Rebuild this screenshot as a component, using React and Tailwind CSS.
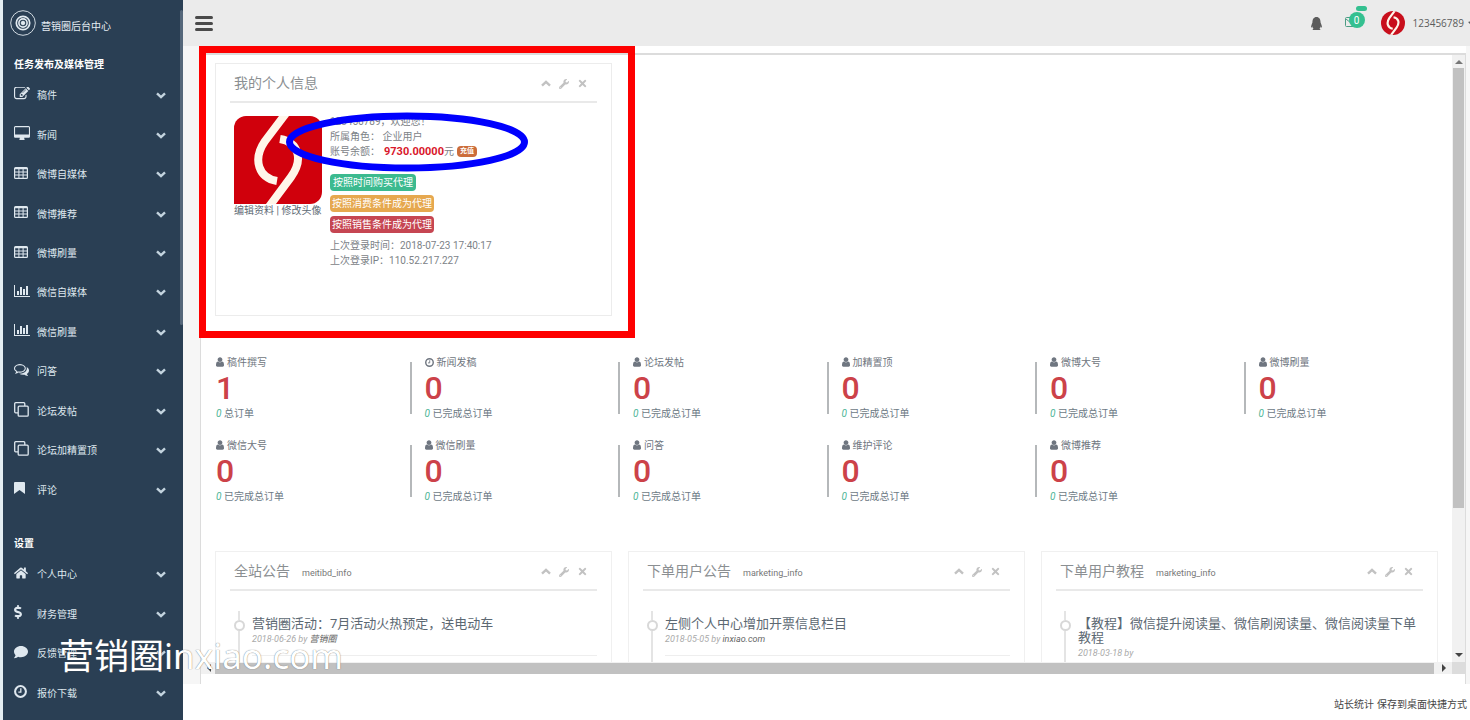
import React from "react";
import { FaQq, FaWrench, FaHome, FaDollarSign, FaComment, FaTimes } from "react-icons/fa";

const Svg = ({ box, d, className }) => (
  <svg viewBox={box} className={className} fill="currentColor" aria-hidden="true">
    <path fillRule="evenodd" d={d} />
  </svg>
);

const EDIT =
  "M888 1184l116-116-152-152-116 116v56h96v96h56zm440-720q-16-16-33 1l-350 350q-17 17-1 33t33-1l350-350q17-17 1-33zm80 594v190q0 119-84.5 203.5t-203.5 84.5h-832q-119 0-203.5-84.5t-84.5-203.5v-832q0-119 84.5-203.5t203.5-84.5h832q63 0 117 25 15 7 18 23 3 17-9 29l-49 49q-14 14-32 8-23-6-45-6h-832q-66 0-113 47t-47 113v832q0 66 47 113t113 47h832q66 0 113-47t47-113v-126q0-13 9-22l64-64q15-15 35-7t20 29zm-96-738l288 288-672 672h-288v-288zm444 132l-92 92-288-288 92-92q28-28 68-28t68 28l152 152q28 28 28 68t-28 68z";
const DESKTOP =
  "M1792 992v-832q0-13-9.5-22.5t-22.5-9.5h-1600q-13 0-22.5 9.5t-9.5 22.5v832q0 13 9.5 22.5t22.5 9.5h1600q13 0 22.5-9.5t9.5-22.5zM1920 160v1088q0 66-47 113t-113 47h-544q0 37 16 77.5t32 71 16 43.5q0 26-19 45t-45 19h-512q-26 0-45-19t-19-45q0-14 16-44t32-70 16-78h-544q-66 0-113-47t-47-113v-1088q0-66 47-113t113-47h1600q66 0 113 47t47 113z";
const BARS =
  "M640 896v512h-256v-512h256zm384-512v1024h-256v-1024h256zm1024 1152v128h-2048v-1536h128v1408h1920zm-640-896v768h-256v-768h256zm384-384v1152h-256v-1152h256z";
const COMMENTS =
  "M704 384q-153 0-286 52t-211.5 141-78.5 191q0 82 53 158t149 132l97 56-35 84q34-20 62-39l44-31 53 10q78 14 153 14 153 0 286-52t211.5-141 78.5-191-78.5-191-211.5-141-286-52zm0-128q191 0 353.5 68.5t256.500 186.500 94 257-94 257-256.500 186.500-353.500 68.500q-86 0-176-16-124 88-278 128-36 9-86 16h-3q-11 0-20.500-8t-11.500-21q-1-3-1-6.500t.5-6.500 2-6l2.500-5 3.500-5.500 4-5 4.500-5 4-4.500q5-6 23-25t26-29.500 22.500-29 25-38.500 20.500-44q-124-72-195-177t-71-224q0-139 94-257t256.500-186.500 353.500-68.500zm822 1169q10 24 20.500 44t25 38.500 22.500 29 26 29.500 23 25q1 1 4 4.500t4.500 5 4 5 3.500 5.500l2.500 5 2 6 .5 6.500-1 6.500q-3 14-13 22t-22 7q-50-7-86-16-154-40-278-128-90 16-176 16-271 0-472-132 58 4 88 4 161 0 309-45t264-129q125-92 192-212t67-254q0-77-23-152 129 71 204 178t75 230q0 120-71 224.500t-195 176.500z";
const USER =
  "M1280 1399q0 109-62.5 187t-150.5 78h-854q-88 0-150.5-78t-62.5-187q0-85 8.5-160.5t31.5-152 58.5-131 94-89 134.5-34.5q131 128 313 128t313-128q76 0 134.5 34.5t94 89 58.5 131 31.5 152 8.5 160.5zm-256-887q0 159-112.5 271.5t-271.5 112.5-271.5-112.5-112.5-271.5 112.5-271.5 271.5-112.5 271.5 112.5 112.5 271.5z";
const TABLE =
  "M1.500 0h11a1.500 1.500 0 0 1 1.500 1.500v9a1.500 1.500 0 0 1-1.500 1.500h-11A1.500 1.500 0 0 1 0 10.500v-9A1.500 1.500 0 0 1 1.500 0zM1.200 2.200v2.200h3.200v-2.200zM5.400 2.200v2.200h3.200v-2.200zM9.600 2.200v2.200h3.200v-2.200zM1.200 5.400v2.200h3.200v-2.200zM5.400 5.400v2.200h3.200v-2.200zM9.600 5.400v2.200h3.200v-2.200zM1.200 8.600v2.200h3.200v-2.200zM5.400 8.600v2.200h3.200v-2.200zM9.600 8.600v2.200h3.200v-2.200z";

const CloneIcon = () => (
  <svg viewBox="0 0 15 15" className="h-[15px] w-[15px]" fill="none" stroke="currentColor" strokeWidth="1.3" aria-hidden="true">
    <rect x="4.200" y="4.200" width="10" height="10" rx="1" />
    <path d="M4 10.800H1.700a1 1 0 0 1-1-1V1.700a1 1 0 0 1 1-1h8.100a1 1 0 0 1 1 1V4" />
  </svg>
);

const ClockIcon = ({ className }) => (
  <svg viewBox="0 0 12 12" className={className} fill="none" stroke="currentColor" aria-hidden="true">
    <circle cx="6" cy="6" r="5" strokeWidth="1.900" />
    <path d="M6.300 3v3.500H4" strokeWidth="1.200" />
  </svg>
);

const Chevron = ({ up, className }) => (
  <svg viewBox="0 0 10 7" className={className} fill="none" stroke="currentColor" strokeWidth="2.400" aria-hidden="true">
    <path d={up ? "M1 5.700 5 1.900l4 3.800" : "M1 1.300l4 3.800 4-3.800"} />
  </svg>
);

const EditIcon = () => <Svg box="0 200 1790 1400" d={EDIT} className="h-[13px] w-4" />;
const DesktopIcon = () => <Svg box="0 0 1920 1664" d={DESKTOP} className="h-[14px] w-4" />;
const TableIcon = () => <Svg box="0 0 14 12" d={TABLE} className="h-3 w-[14px]" />;
const BarsIcon = () => <Svg box="0 128 2048 1536" d={BARS} className="h-3 w-4" />;
const CommentsIcon = () => <Svg box="0 256 1792 1408" d={COMMENTS} className="h-3 w-[15px]" />;
const BookmarkIcon = () => <Svg box="0 0 11 12" d="M1 0h9q1 0 1 1v11L5.500 8 0 12V1q0-1 1-1z" className="h-3 w-[11px]" />;
const UserIcon = () => <Svg box="0 128 1280 1536" d={USER} className="h-[10px] w-2" />;

const menu = [
  ["稿件", EditIcon],
  ["新闻", DesktopIcon],
  ["微博自媒体", TableIcon],
  ["微博推荐", TableIcon],
  ["微博刷量", TableIcon],
  ["微信自媒体", BarsIcon],
  ["微信刷量", BarsIcon],
  ["问答", CommentsIcon],
  ["论坛发帖", CloneIcon],
  ["论坛加精置顶", CloneIcon],
  ["评论", BookmarkIcon],
];

const settings = [
  ["个人中心", () => <FaHome className="h-[14px] w-[14px]" />],
  ["财务管理", () => <FaDollarSign className="h-[14px] w-2" />],
  ["反馈管理", () => <FaComment className="h-[14px] w-[14px]" />],
  ["报价下载", () => <ClockIcon className="h-[13px] w-[13px]" />],
];

const stats = [
  ["稿件撰写", 1, "总订单"],
  ["新闻发稿", 0, "已完成总订单"],
  ["论坛发帖", 0, "已完成总订单"],
  ["加精置顶", 0, "已完成总订单"],
  ["微博大号", 0, "已完成总订单"],
  ["微博刷量", 0, "已完成总订单"],
  ["微信大号", 0, "已完成总订单"],
  ["微信刷量", 0, "已完成总订单"],
  ["问答", 0, "已完成总订单"],
  ["维护评论", 0, "已完成总订单"],
  ["微博推荐", 0, "已完成总订单"],
];

const news = [
  { title: "全站公告", sub: "meitibd_info", text: "营销圈活动：7月活动火热预定，送电动车", date: "2018-06-26 by", by: "营销圈" },
  { title: "下单用户公告", sub: "marketing_info", text: "左侧个人中心增加开票信息栏目", date: "2018-05-05 by", by: "inxiao.com" },
  { title: "下单用户教程", sub: "marketing_info", text: "【教程】微信提升阅读量、微信刷阅读量、微信阅读量下单教程", date: "2018-03-18 by", by: "" },
];

function MenuList({ items, className }) {
  return (
    <ul className={`grid auto-rows-fr ${className}`}>
      {items.map(([label, Icon]) => (
        <li key={label} className="flex">
          <button type="button" className="flex w-full items-center pr-[14px] pl-[11px] text-left text-[#dfe8ef]">
            <span className="flex w-[23px] items-center pb-1">
              <Icon />
            </span>
            <span className="flex-1 text-[10px]">{label}</span>
            <Chevron className="h-[7px] w-[10px] text-[#c4d4df]" />
          </button>
        </li>
      ))}
    </ul>
  );
}

function LogoSwirl() {
  return (
    <g fill="none" stroke="#fff6ea" strokeWidth="8">
      <path d="M53-4 31 25C18 44 25 62 43 65" />
      <path d="M34 92 57 61C70 43 64 26 46 23" />
    </g>
  );
}

function PanelHead({ title, sub }) {
  return (
    <div className="flex h-[39px] items-center border-b-2 border-[#e9e9e9] pt-0.5 pr-[9px] pl-1">
      <h2 className="text-[14px] text-[#8b8f92]">{title}</h2>
      {sub && <span className="ml-3 pt-1 text-[9px] text-[#777]">{sub}</span>}
      <div className="ml-auto flex items-center gap-2 text-[#c2c2c2]">
        <button type="button" aria-label="折叠">
          <Chevron up className="h-[7px] w-[10px]" />
        </button>
        <button type="button" aria-label="设置">
          <FaWrench className="h-[10px] w-[10px]" />
        </button>
        <button type="button" aria-label="关闭">
          <FaTimes className="h-[11px] w-[11px]" />
        </button>
      </div>
    </div>
  );
}

function ProfilePanel() {
  return (
    <section className="h-[253px] border border-[#ececec] bg-white px-[14px]">
      <PanelHead title="我的个人信息" />
      <div className="flex gap-[7px] pt-[11px] pl-1">
        <div className="w-[89px] pt-0.5 text-[10px] whitespace-nowrap text-[#5e6a75]">
          <svg viewBox="0 0 88 88" className="h-[88px] w-[88px] rounded-xl rounded-bl-none" role="img" aria-label="头像">
            <rect width="88" height="88" fill="#d0000c" />
            <LogoSwirl />
          </svg>
          <div className="leading-[14px]">
            <a href="#edit">编辑资料</a> | <a href="#avatar">修改头像</a>
          </div>
        </div>
        <div className="text-[10px] leading-[15px] text-[#7c8287]">
          <p>123456789，欢迎您！</p>
          <p>所属角色： 企业用户</p>
          <p className="flex items-center">
            账号余额：<b className="ml-1 text-[11px] text-[#d9172b]">9730.00000</b>元
            <a href="#pay" className="ml-[3px] rounded-sm bg-[#cc6d3a] px-[3px] text-[7px] leading-[11px] font-bold text-white">
              充值
            </a>
          </p>
          <div className="flex flex-col items-start gap-1 pt-[15px] pb-[5px] leading-[17px] text-white">
            <button type="button" className="rounded-sm bg-[#3cba8f] px-[3px]">按照时间购买代理</button>
            <button type="button" className="rounded-sm bg-[#e6a84f] px-[2px]">按照消费条件成为代理</button>
            <button type="button" className="rounded-sm bg-[#c64652] px-[2px]">按照销售条件成为代理</button>
          </div>
          <p>上次登录时间：2018-07-23 17:40:17</p>
          <p>上次登录IP：110.52.217.227</p>
        </div>
      </div>
    </section>
  );
}

function Stat({ label, value, note, first, clock }) {
  return (
    <div className="flex h-[83px] gap-[13px]">
      <div className={`mt-2 h-[52px] w-0.5 ${first ? "" : "bg-[#b5b8ba]"}`} />
      <div className="text-[10px] text-[#6d7a85]">
        <div className="flex h-4 items-center gap-[3px] text-[#6f7680]">
          {clock ? <ClockIcon className="h-[9px] w-[9px]" /> : <UserIcon />}
          {label}
        </div>
        <div className="text-[32px] leading-9 font-medium text-[#cc4249]">{value}</div>
        <div className="h-4 leading-4">
          <i className="text-[#4cb596]">0</i> {note}
        </div>
      </div>
    </div>
  );
}

function NewsPanel({ item }) {
  return (
    <section className="border border-[#f0f0f0] bg-white px-[14px] pb-10">
      <PanelHead title={item.title} sub={item.sub} />
      <div className="flex gap-2 pt-5 pl-1">
        <div className="flex w-[10px] flex-col items-center">
          <div className="h-[9px] w-0.5 bg-[#e4e4e4]" />
          <div className="h-[11px] w-[11px] shrink-0 rounded-full border-2 border-[#d8d8d8]" />
          <div className="h-10 w-0.5 bg-[#e4e4e4]" />
        </div>
        <div className="flex-1">
          <div className="border-b border-[#eee] pt-[6px] pb-2">
            <a href="#news" className="block text-[13px] leading-[14px] text-[#5c6872]">{item.text}</a>
            <p className="text-[9px] leading-4 text-[#aaa] italic">
              {item.date} <span className="text-[#666]">{item.by}</span>
            </p>
          </div>
        </div>
      </div>
    </section>
  );
}

const Arrow = ({ d, className = "" }) => (
  <svg viewBox="0 0 8 8" className={`h-2 w-2 ${className}`} fill="currentColor" aria-hidden="true">
    <path d={d} />
  </svg>
);

export default function App() {
  return (
    <div className="relative flex h-screen overflow-hidden bg-white font-[Roboto,'Noto_Sans_CJK_SC',sans-serif]">
      <aside className="flex w-[183px] shrink-0 border-l-[3px] border-[#e4eef2] bg-[#2a3f54]">
        <nav className="min-w-0 flex-1">
          <a href="#home" className="flex h-[53px] items-center gap-[5px] pb-[7px] pl-[7px] text-[10px] text-[#e6edf3]">
            <svg viewBox="0 0 26 26" className="h-[26px] w-[26px]" fill="none" stroke="#e3ebf1" aria-hidden="true">
              <circle cx="13" cy="13" r="12.300" strokeWidth="0.900" />
              <circle cx="13" cy="13" r="6.700" strokeWidth="1.700" />
              <circle cx="13" cy="13" r="4.100" strokeWidth="1.600" />
              <circle cx="13" cy="13" r="1.800" fill="#e3ebf1" />
            </svg>
            <span className="pt-[6px]">营销圈后台中心</span>
          </a>
          <h3 className="h-[23px] pl-[11px] text-[10px] leading-6 font-bold text-white">任务发布及媒体管理</h3>
          <MenuList items={menu} className="h-[434px]" />
          <h3 className="mt-[22px] h-[23px] pl-[11px] text-[10px] leading-6 font-bold text-white">设置</h3>
          <MenuList items={settings} className="h-[158px]" />
        </nav>
        <div className="mt-[10px] h-[315px] w-[3px] rounded-full bg-[#55677a]" />
      </aside>

      <div className="flex min-w-0 flex-1 flex-col">
        <header className="flex h-[46px] shrink-0 items-center bg-[#ebebeb] pl-3">
          <button type="button" aria-label="菜单" className="flex flex-col gap-[3px]">
            <span className="h-[3px] w-[18px] rounded-full bg-[#4a4a4a]" />
            <span className="h-[3px] w-[18px] rounded-full bg-[#4a4a4a]" />
            <span className="h-[3px] w-[18px] rounded-full bg-[#4a4a4a]" />
          </button>
          <div className="-mr-1 ml-auto flex items-center text-[#5c5c5c]">
            <FaQq className="h-[13px] w-[13px]" />
            <div className="relative ml-[22px] h-6 w-5">
              <svg viewBox="0 0 12 10" className="mt-[6px] h-[10px] w-3" fill="none" stroke="#4d9c84" aria-hidden="true">
                <rect x="0.500" y="0.500" width="11" height="9" rx="1" />
                <path d="M1 2l5 4 5-4" />
              </svg>
              <span className="absolute top-px left-1 flex h-4 w-4 items-center justify-center rounded-full bg-[#34c090] text-[10px] text-white">0</span>
              <span className="absolute -top-[5px] left-[11px] h-[5px] w-[11px] rounded-full bg-[#34c090]" />
            </div>
            <svg viewBox="0 0 88 88" className="ml-4 h-6 w-6 rounded-full" role="img" aria-label="头像">
              <rect width="88" height="88" fill="#c80f1c" />
              <LogoSwirl />
            </svg>
            <button type="button" className="ml-2 flex items-center gap-1 text-[10px] font-[Open_Sans,sans-serif]">
              123456789
              <Chevron className="h-1 w-[6px]" />
            </button>
          </div>
        </header>

        <main className="flex min-h-0 flex-1 bg-white">
          <div className="w-[17px] shrink-0 bg-[#f6f6f6]" />
          <div className="flex min-w-0 flex-1 flex-col pt-[7px]">
            <div className="flex min-h-0 flex-1 flex-col border-x border-t-2 border-[#dcdcdc]">
              <div className="flex min-h-0 flex-1">
                <div className="min-w-0 flex-1 overflow-hidden px-[14px] pt-2">
                  <div className="grid grid-cols-3 gap-4">
                    <ProfilePanel />
                  </div>
                  <div className="-mx-[14px] mt-[38px] grid grid-cols-6">
                    {stats.map(([label, value, note], i) => (
                      <Stat key={label} label={label} value={value} note={note} first={i % 6 === 0} clock={i === 1} />
                    ))}
                  </div>
                  <div className="mt-[31px] grid grid-cols-3 gap-4">
                    {news.map((item) => (
                      <NewsPanel key={item.title} item={item} />
                    ))}
                  </div>
                </div>
                <div className="flex w-[13px] shrink-0 flex-col items-center bg-[#f1f1f1] py-[3px] text-[#777]">
                  <Arrow d="M0 6l4-4 4 4z" />
                  <div className="mt-[2px] h-[440px] w-[11px] bg-[#c1c1c1]" />
                  <Arrow d="M0 2l4 4 4-4z" className="mt-auto text-[#444]" />
                </div>
              </div>
              <div className="flex h-3 shrink-0 items-center bg-[#f1f1f1] pl-1 text-[#444]">
                <Arrow d="M6 0L2 4l4 4z" />
                <div className="mx-[2px] h-[11px] flex-1 bg-[#c1c1c1]" />
                <Arrow d="M2 0l4 4-4 4z" className="mx-1" />
                <div className="h-3 w-[13px] bg-[#dcdcdc]" />
              </div>
              <div className="h-[10px] shrink-0 bg-white" />
            </div>
          </div>
          <div className="w-1 shrink-0 bg-[#f6f6f6]" />
        </main>
        <footer className="flex h-9 shrink-0 items-center justify-end gap-[3px] pt-1 pr-[3px] text-[10px] text-[#444]">
          <a href="#stats">站长统计</a>
          <a href="#shortcut">保存到桌面快捷方式</a>
        </footer>
      </div>

      <div className="pointer-events-none absolute top-[46px] left-[199px] h-[292px] w-[436px] border-[7px] border-[#fe0000]" />
      <svg viewBox="0 0 242 60" className="pointer-events-none absolute top-[112px] left-[286px] h-[60px] w-[242px]" fill="none" aria-hidden="true">
        <ellipse cx="121" cy="30" rx="117.500" ry="26" stroke="#0000fe" strokeWidth="7" />
      </svg>
      <div className="pointer-events-none absolute top-[632px] left-[59px] text-[35px] leading-[48px] whitespace-nowrap text-white [text-shadow:0_0_1px_#555] font-[Noto_Sans,'Noto_Sans_CJK_SC',sans-serif]">
        营销圈inxiao.com
      </div>
    </div>
  );
}
